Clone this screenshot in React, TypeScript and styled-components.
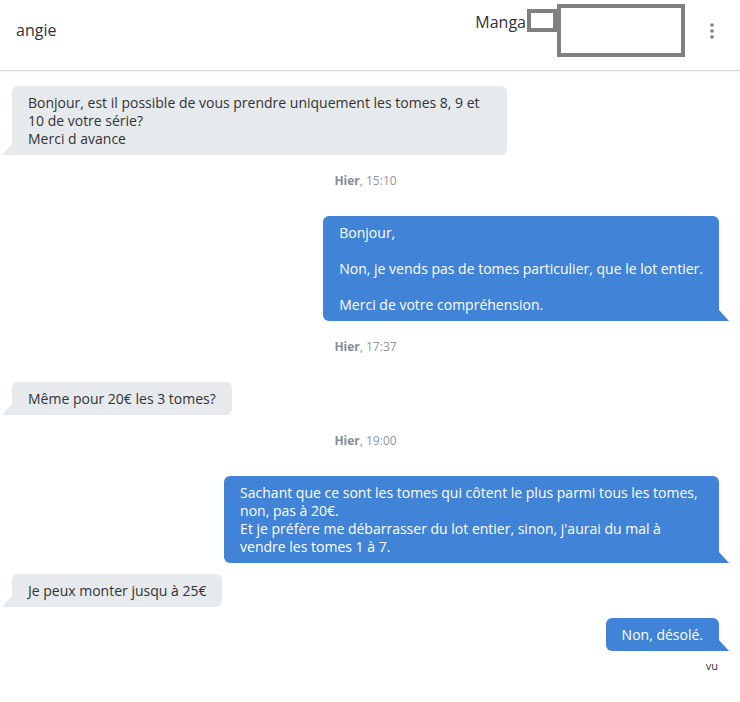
import React from "react";
import styled, { createGlobalStyle } from "styled-components";

const GlobalStyle = createGlobalStyle`
  html, body {
    margin: 0;
    padding: 0;
    background: #ffffff;
  }
  body {
    font-family: "Open Sans", "Noto Sans", "Liberation Sans", sans-serif;
    color: #333333;
  }
  * { box-sizing: border-box; }
`;

const Page = styled.div`
  width: 740px;
  min-height: 702px;
  background: #fff;
`;

const Header = styled.header`
  height: 71px;
  display: flex;
  align-items: flex-start;
  padding: 0 16px;
  border-bottom: 1px solid #d9d9d9;
  box-shadow: 0 1px 2px rgba(0, 0, 0, 0.04);
`;

const Name = styled.div`
  margin-top: 19px;
  font-size: 16px;
  line-height: 22px;
  color: #333;
`;

const TitleGroup = styled.div`
  margin-left: auto;
  display: flex;
  align-items: flex-start;
`;

const Title = styled.span`
  margin-top: 11px;
  padding-right: 1px;
  font-size: 16px;
  line-height: 22px;
  color: #333;
`;

const Redact = styled.div<{ $w: number; $h: number; $top: number }>`
  width: ${(p) => p.$w}px;
  height: ${(p) => p.$h}px;
  margin-top: ${(p) => p.$top}px;
  border: 4px solid #808080;
  background: #fff;
`;

const MenuButton = styled.button`
  margin-left: 15px;
  margin-top: 19px;
  width: 24px;
  height: 24px;
  padding: 0;
  border: none;
  background: transparent;
  display: flex;
  align-items: center;
  justify-content: center;
  cursor: pointer;
`;

const Thread = styled.main`
  display: flex;
  flex-direction: column;
  padding: 15px 21px 40px 12px;
`;

const Row = styled.div<{ $mine?: boolean; $first?: boolean }>`
  display: flex;
  justify-content: ${(p) => (p.$mine ? "flex-end" : "flex-start")};
  margin-top: ${(p) => (p.$first ? 0 : 11)}px;
`;

const Bubble = styled.div<{ $mine?: boolean }>`
  position: relative;
  max-width: 70%;
  padding: 7.5px 16px;
  font-size: 14px;
  line-height: 18px;
  white-space: pre-line;
  background: ${(p) => (p.$mine ? "#4183d7" : "#e6eaed")};
  color: ${(p) => (p.$mine ? "#ffffff" : "#333333")};
  border-radius: ${(p) => (p.$mine ? "6px 6px 0 6px" : "6px 6px 6px 0")};

  &::after {
    content: "";
    position: absolute;
    bottom: 0;
    width: 0;
    height: 0;
    border-bottom: 11px solid ${(p) => (p.$mine ? "#4183d7" : "#e6eaed")};
    ${(p) =>
      p.$mine
        ? `right: -10px; border-right: 10px solid transparent;`
        : `left: -10px; border-left: 10px solid transparent;`}
  }
`;

const Stamp = styled.div`
  margin: 18px 0 27px;
  text-align: center;
  font-size: 12px;
  line-height: 16px;
  color: #8e979f;

  b {
    font-weight: 700;
    color: #848e97;
  }
`;

const Seen = styled.div`
  margin-top: 8px;
  text-align: right;
  padding-right: 1px;
  font-size: 11px;
  line-height: 14px;
  color: #333;
`;

type Item =
  | { kind: "msg"; mine: boolean; text: string }
  | { kind: "stamp"; time: string };

const items: Item[] = [
  {
    kind: "msg",
    mine: false,
    text:
      "Bonjour, est il possible de vous prendre uniquement les tomes 8, 9 et 10 de votre série?\nMerci d avance",
  },
  { kind: "stamp", time: "15:10" },
  {
    kind: "msg",
    mine: true,
    text:
      "Bonjour,\n\nNon, je vends pas de tomes particulier, que le lot entier.\n\nMerci de votre compréhension.",
  },
  { kind: "stamp", time: "17:37" },
  { kind: "msg", mine: false, text: "Même pour 20€ les 3 tomes?" },
  { kind: "stamp", time: "19:00" },
  {
    kind: "msg",
    mine: true,
    text:
      "Sachant que ce sont les tomes qui côtent le plus parmi tous les tomes, non, pas à 20€.\nEt je préfère me débarrasser du lot entier, sinon, j'aurai du mal à vendre les tomes 1 à 7.",
  },
  { kind: "msg", mine: false, text: "Je peux monter jusqu à 25€" },
  { kind: "msg", mine: true, text: "Non, désolé." },
];

const Kebab = () => (
  <svg width="4" height="16" viewBox="0 0 4 16" aria-hidden="true">
    <circle cx="2" cy="2" r="1.8" fill="#6e7d8c" />
    <circle cx="2" cy="8" r="1.8" fill="#6e7d8c" />
    <circle cx="2" cy="14" r="1.8" fill="#6e7d8c" />
  </svg>
);

export default function App() {
  return (
    <Page>
      <GlobalStyle />
      <Header>
        <Name>angie</Name>
        <TitleGroup>
          <Title>Manga</Title>
          <Redact $w={30} $h={23} $top={9} />
          <Redact $w={128} $h={53} $top={4} />
        </TitleGroup>
        <MenuButton aria-label="Options">
          <Kebab />
        </MenuButton>
      </Header>
      <Thread>
        {items.map((it, i) => {
          if (it.kind === "stamp") {
            return (
              <Stamp key={i}>
                <b>Hier</b>, {it.time}
              </Stamp>
            );
          }
          const prev = items[i - 1];
          const first = i === 0 || (prev && prev.kind === "stamp");
          return (
            <Row key={i} $mine={it.mine} $first={first}>
              <Bubble $mine={it.mine}>{it.text}</Bubble>
            </Row>
          );
        })}
        <Seen>vu</Seen>
      </Thread>
    </Page>
  );
}
